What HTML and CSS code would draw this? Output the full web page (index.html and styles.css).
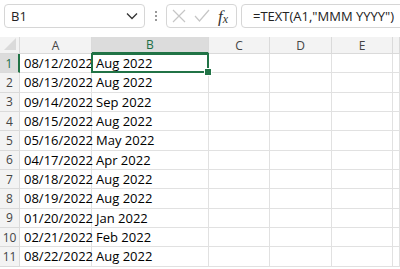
FILE: index.html
```html
<!DOCTYPE html>
<html lang="en">
<head>
    <meta charset="UTF-8">
    <title>Sheet</title>
    <link rel="stylesheet" href="styles.css">
</head>
<body>
    <div class="toolbar">
        <div class="name-box">
            <span>B1</span>
            <svg class="chevron" width="12" height="8" viewBox="0 0 12 8"><path d="M1 1.5 L6 6.5 L11 1.5" fill="none" stroke="#333" stroke-width="1.3"/></svg>
        </div>
        <div class="dots"><i></i><i></i><i></i></div>
        <div class="fx-box">
            <svg width="14" height="14" viewBox="0 0 14 14"><path d="M1 1 L13 13 M13 1 L1 13" stroke="#c6c6c6" stroke-width="1.2"/></svg>
            <svg width="16" height="14" viewBox="0 0 16 14"><path d="M1 7 L5.5 12 L15 1" fill="none" stroke="#c6c6c6" stroke-width="1.2"/></svg>
            <span class="fx">f<sub>x</sub></span>
        </div>
        <div class="formula">=TEXT(A1,"MMM YYYY")</div>
    </div>

    <div class="grid">
        <div class="corner"><svg width="14" height="14" viewBox="0 0 14 14"><path d="M13 1 L13 13 L1 13 Z" fill="#dadada"/></svg></div>
        <div class="col-head">A</div>
        <div class="col-head active">B</div>
        <div class="col-head">C</div>
        <div class="col-head">D</div>
        <div class="col-head">E</div>
        <div class="col-head"></div>

        <div class="row-head active">1</div><div class="cell">08/12/2022</div><div class="cell selected">Aug 2022</div><div class="cell"></div><div class="cell"></div><div class="cell"></div><div class="cell"></div>
        <div class="row-head">2</div><div class="cell">08/13/2022</div><div class="cell">Aug 2022</div><div class="cell"></div><div class="cell"></div><div class="cell"></div><div class="cell"></div>
        <div class="row-head">3</div><div class="cell">09/14/2022</div><div class="cell">Sep 2022</div><div class="cell"></div><div class="cell"></div><div class="cell"></div><div class="cell"></div>
        <div class="row-head">4</div><div class="cell">08/15/2022</div><div class="cell">Aug 2022</div><div class="cell"></div><div class="cell"></div><div class="cell"></div><div class="cell"></div>
        <div class="row-head">5</div><div class="cell">05/16/2022</div><div class="cell">May 2022</div><div class="cell"></div><div class="cell"></div><div class="cell"></div><div class="cell"></div>
        <div class="row-head">6</div><div class="cell">04/17/2022</div><div class="cell">Apr 2022</div><div class="cell"></div><div class="cell"></div><div class="cell"></div><div class="cell"></div>
        <div class="row-head">7</div><div class="cell">08/18/2022</div><div class="cell">Aug 2022</div><div class="cell"></div><div class="cell"></div><div class="cell"></div><div class="cell"></div>
        <div class="row-head">8</div><div class="cell">08/19/2022</div><div class="cell">Aug 2022</div><div class="cell"></div><div class="cell"></div><div class="cell"></div><div class="cell"></div>
        <div class="row-head">9</div><div class="cell">01/20/2022</div><div class="cell">Jan 2022</div><div class="cell"></div><div class="cell"></div><div class="cell"></div><div class="cell"></div>
        <div class="row-head">10</div><div class="cell">02/21/2022</div><div class="cell">Feb 2022</div><div class="cell"></div><div class="cell"></div><div class="cell"></div><div class="cell"></div>
        <div class="row-head">11</div><div class="cell">08/22/2022</div><div class="cell">Aug 2022</div><div class="cell"></div><div class="cell"></div><div class="cell"></div><div class="cell"></div>
    </div>
</body>
</html>
```

FILE: styles.css
```css
body {
    margin: 0;
    background: #fff;
    font-family: "Open Sans", "Noto Sans", sans-serif;
    color: #222;
    overflow: hidden;
}
.toolbar {
    height: 37px;
    display: flex;
    align-items: flex-start;
    padding: 4px 0 0 4px;
    box-sizing: border-box;
}
.name-box {
    width: 141px;
    height: 24px;
    box-sizing: border-box;
    border: 1px solid #d6d6d6;
    border-radius: 4px;
    display: flex;
    align-items: center;
    justify-content: space-between;
    padding: 0 6px 0 6px;
    font-size: 13px;
    color: #222;
}
.dots {
    width: 21px;
    height: 24px;
    display: flex;
    flex-direction: column;
    align-items: center;
    justify-content: center;
    gap: 2px;
}
.dots i {
    width: 2px;
    height: 2px;
    background: #777;
    border-radius: 1px;
}
.fx-box {
    width: 71px;
    height: 24px;
    box-sizing: border-box;
    border: 1px solid #d6d6d6;
    border-radius: 4px;
    display: flex;
    align-items: center;
    gap: 8px;
    padding-left: 5px;
}
.fx {
    font-family: "Liberation Serif", serif;
    font-style: italic;
    font-size: 17px;
    color: #333;
    line-height: 1;
}
.fx sub {
    font-size: 12px;
    vertical-align: -1px;
}
.formula {
    flex: 1;
    height: 24px;
    margin-left: 4px;
    margin-right: -10px;
    box-sizing: border-box;
    border: 1px solid #d6d6d6;
    border-radius: 4px;
    padding-left: 11px;
    font-size: 13px;
    line-height: 22px;
    color: #222;
}
.grid {
    display: grid;
    grid-template-columns: 20px 72px 117px 61px 62px 61px 1fr;
    grid-template-rows: 17px repeat(11, 19.35px);
}
.corner,
.col-head,
.row-head {
    background: #f3f3f3;
    color: #444;
    font-size: 12px;
    display: flex;
    align-items: center;
    justify-content: center;
    box-sizing: border-box;
    border-right: 1px solid #dadada;
    border-bottom: 1px solid #dadada;
}
.corner {
    justify-content: flex-end;
    align-items: flex-end;
    padding: 0 2px 2px 0;
}
.col-head.active {
    background: #dcdcdc;
    color: #1e6e46;
    border-bottom: 2px solid #217346;
}
.row-head.active {
    background: #dcdcdc;
    color: #1e6e46;
    border-right: 2px solid #217346;
}
.cell {
    box-sizing: border-box;
    border-right: 1px solid #e1e1e1;
    border-bottom: 1px solid #e1e1e1;
    font-size: 13px;
    line-height: 19px;
    padding-left: 4px;
    color: #000;
    white-space: nowrap;
}
.selected {
    position: relative;
}
.selected::after {
    content: "";
    position: absolute;
    left: -1px;
    top: -1px;
    right: -1px;
    bottom: -1px;
    border: 2px solid #217346;
}
.selected::before {
    content: "";
    position: absolute;
    right: -4px;
    bottom: -4px;
    width: 6px;
    height: 6px;
    background: #217346;
    border: 1px solid #fff;
    z-index: 1;
}
```
